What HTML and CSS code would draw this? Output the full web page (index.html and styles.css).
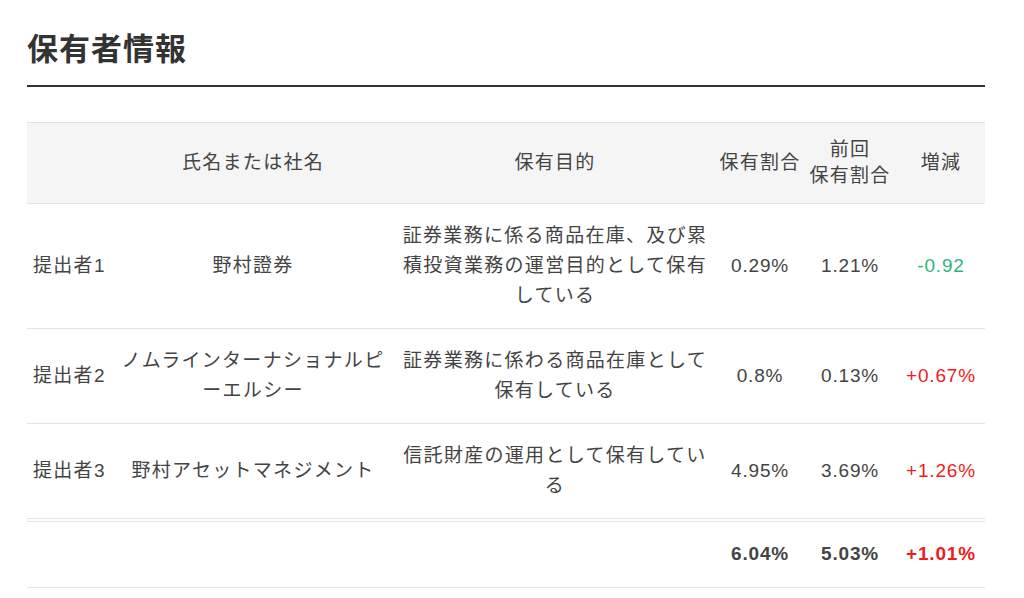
FILE: index.html
```html
<!DOCTYPE html>
<html lang="ja">
<head>
<meta charset="utf-8">
<title>保有者情報</title>
<link rel="stylesheet" href="styles.css">
</head>
<body>
<section class="holders">
  <h2 class="holders-title">保有者情報</h2>
  <table class="holders-table">
    <colgroup>
      <col class="c-no"><col class="c-name"><col class="c-purpose"><col class="c-ratio"><col class="c-prev"><col class="c-diff">
    </colgroup>
    <thead>
      <tr>
        <th class="cell-no"></th>
        <th class="cell-text">氏名または社名</th>
        <th class="cell-text">保有目的</th>
        <th class="cell-num">保有割合</th>
        <th class="cell-num">前回<br>保有割合</th>
        <th class="cell-num">増減</th>
      </tr>
    </thead>
    <tbody>
      <tr>
        <td class="cell-no">提出者1</td>
        <td class="cell-text">野村證券</td>
        <td class="cell-text">証券業務に係る商品在庫、及び累積投資業務の運営目的として保有している</td>
        <td class="cell-num">0.29%</td>
        <td class="cell-num">1.21%</td>
        <td class="cell-num down">-0.92</td>
      </tr>
      <tr>
        <td class="cell-no">提出者2</td>
        <td class="cell-text">ノムラインターナショナルピーエルシー</td>
        <td class="cell-text">証券業務に係わる商品在庫として保有している</td>
        <td class="cell-num">0.8%</td>
        <td class="cell-num">0.13%</td>
        <td class="cell-num up">+0.67%</td>
      </tr>
      <tr>
        <td class="cell-no">提出者3</td>
        <td class="cell-text">野村アセットマネジメント</td>
        <td class="cell-text">信託財産の運用として保有している</td>
        <td class="cell-num">4.95%</td>
        <td class="cell-num">3.69%</td>
        <td class="cell-num up">+1.26%</td>
      </tr>
    </tbody>
    <tfoot>
      <tr>
        <td class="cell-no"></td>
        <td class="cell-text"></td>
        <td class="cell-text"></td>
        <td class="cell-num">6.04%</td>
        <td class="cell-num">5.03%</td>
        <td class="cell-num up">+1.01%</td>
      </tr>
    </tfoot>
  </table>
</section>
</body>
</html>
```
FILE: styles.css
```css
html, body {
  margin: 0;
  padding: 0;
  background: #ffffff;
}

body {
  font-family: "Liberation Sans", "Noto Sans CJK JP", sans-serif;
  color: #444444;
}

.holders {
  width: 958px;
  margin: 0 0 0 27px;
  padding-top: 29px;
}

.holders-title {
  margin: 0;
  font-size: 31px;
  font-weight: 700;
  line-height: 42px;
  letter-spacing: 1px;
  color: #333333;
  padding-bottom: 14px;
  border-bottom: 2px solid #333333;
}

.holders-table {
  width: 958px;
  margin-top: 35px;
  border-collapse: collapse;
  table-layout: fixed;
  font-size: 19px;
  letter-spacing: 1.3px;
  border-top: 1px solid #e3e3e3;
}

.c-no { width: 86px; }
.c-name { width: 280px; }
.c-purpose { width: 324px; }
.c-ratio { width: 86px; }
.c-prev { width: 94px; }
.c-diff { width: 88px; }

.holders-table th {
  background: #f5f5f5;
  font-weight: 400;
  line-height: 26px;
  padding: 14px 8px 14px;
  text-align: center;
  border-bottom: 1px solid #e3e3e3;
}

.holders-table td {
  line-height: 30px;
  padding: 17px 8px 17px;
  text-align: center;
  border-bottom: 1px solid #e3e3e3;
}

.holders-table .cell-text {
  padding-left: 5px;
  padding-right: 5px;
}

.holders-table .cell-no {
  text-align: left;
  padding-left: 6px;
  padding-right: 0;
}

.holders-table .cell-num {
  padding-left: 1px;
  padding-right: 1px;
}

.holders-table td.cell-num {
  letter-spacing: 0.8px;
}

.holders-table tbody tr:last-child td {
  border-bottom: 4px double #e3e3e3;
}

.holders-table tfoot td {
  font-weight: 700;
  padding-top: 17px;
  padding-bottom: 18px;
}

.down { color: #2fb578; }
.up { color: #ee1c1c; }
```
